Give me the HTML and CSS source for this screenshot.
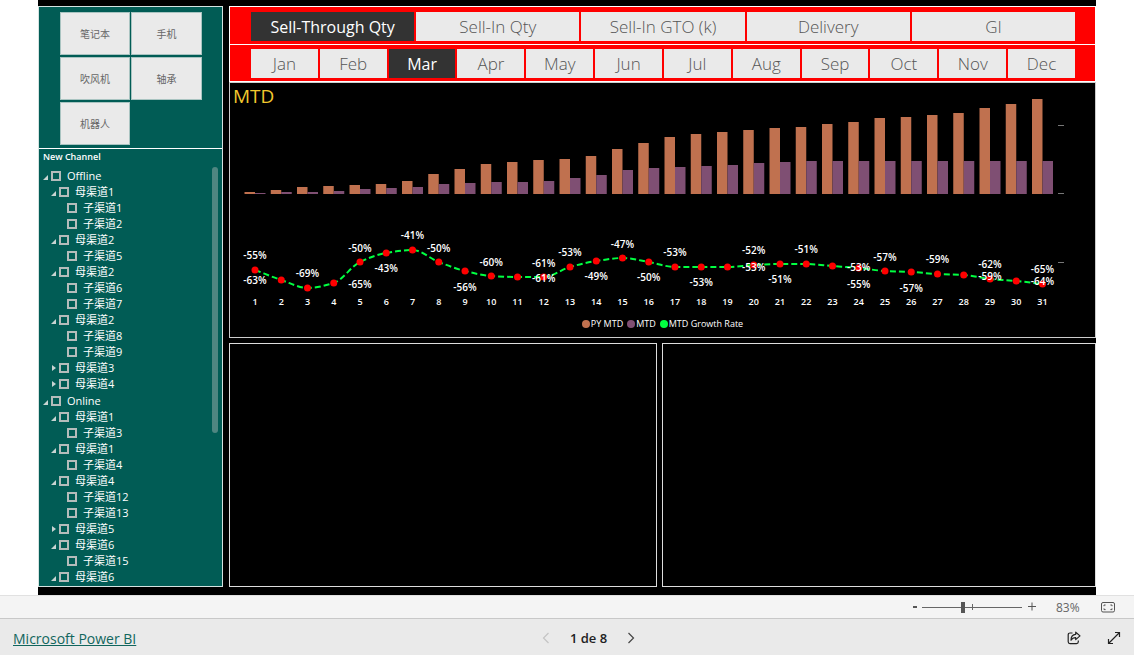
FILE: index.html
```html
<!DOCTYPE html>
<html lang="en">
<head>
<meta charset="utf-8">
<title>Microsoft Power BI</title>
<link rel="stylesheet" href="styles.css">
</head>
<body>
<main class="stage">
  <div class="report">
    <aside class="side">
      <div class="products">
        <button type="button">笔记本</button>
        <button type="button">手机</button>
        <button type="button">吹风机</button>
        <button type="button">轴承</button>
        <button type="button">机器人</button>
      </div>
      <section class="channels">
        <h2 class="channels-title">New Channel</h2>
        <div class="channels-body">
          <ul class="tree" id="tree"></ul>
          <div class="scroll-thumb"></div>
        </div>
      </section>
    </aside>
    <div class="content">
      <div class="slicer slicer-metric">
        <button type="button" class="tile selected">Sell-Through Qty</button>
        <button type="button" class="tile">Sell-In Qty</button>
        <button type="button" class="tile">Sell-In GTO (k)</button>
        <button type="button" class="tile">Delivery</button>
        <button type="button" class="tile">GI</button>
      </div>
      <div class="slicer slicer-month">
        <button type="button" class="tile">Jan</button>
        <button type="button" class="tile">Feb</button>
        <button type="button" class="tile selected">Mar</button>
        <button type="button" class="tile">Apr</button>
        <button type="button" class="tile">May</button>
        <button type="button" class="tile">Jun</button>
        <button type="button" class="tile">Jul</button>
        <button type="button" class="tile">Aug</button>
        <button type="button" class="tile">Sep</button>
        <button type="button" class="tile">Oct</button>
        <button type="button" class="tile">Nov</button>
        <button type="button" class="tile">Dec</button>
      </div>
      <section class="chart-card">
        <h2 class="chart-title">MTD</h2>
        <svg class="chart" id="chart" viewBox="0 0 865 233" role="img" aria-label="MTD by day"></svg>
        <ul class="legend">
          <li><span class="dot dot-py"></span>PY MTD</li>
          <li><span class="dot dot-mtd"></span>MTD</li>
          <li><span class="dot dot-rate"></span>MTD Growth Rate</li>
        </ul>
      </section>
      <div class="empties">
        <section class="empty"></section>
        <section class="empty"></section>
      </div>
    </div>
  </div>
</main>
<div class="zoombar">
  <button type="button" class="zoom-step" aria-label="Zoom out"><svg width="6" height="10" viewBox="0 0 6 10"><path d="M1 5h4" stroke="#555" stroke-width="2"/></svg></button>
  <input class="zoom-range" type="range" min="0" max="100" value="41" aria-label="Zoom">
  <button type="button" class="zoom-step zoom-in" aria-label="Zoom in"><svg width="8" height="10" viewBox="0 0 8 10"><path d="M0 4.500h8M4 .5v8" stroke="#555" stroke-width="1"/></svg></button>
  <span class="zoom-value">83%</span>
  <button type="button" class="zoom-fit" aria-label="Fit to page"><svg width="14" height="11" viewBox="0 0 14 11" fill="none" stroke="#555"><rect x=".5" y=".5" width="13" height="9.5" rx="1.5"/><path d="M3 4.2V3h1.600M9.400 3H11v1.200M3 6.400v1.200h1.600M9.400 7.600H11V6.400"/></svg></button>
</div>
<footer class="footer">
  <a class="brand" href="#">Microsoft Power BI</a>
  <nav class="pager">
    <button type="button" aria-label="Previous page" disabled><svg width="8" height="12" viewBox="0 0 8 12" fill="none" stroke="#c4c4c4" stroke-width="1.2"><path d="M6.5 1 1.5 6l5 5"/></svg></button>
    <span>1 de 8</span>
    <button type="button" aria-label="Next page"><svg width="8" height="12" viewBox="0 0 8 12" fill="none" stroke="#444" stroke-width="1.2"><path d="M1.5 1l5 5-5 5"/></svg></button>
  </nav>
  <div class="actions">
    <button type="button" aria-label="Share"><svg width="14" height="14" viewBox="0 0 14 14" fill="none" stroke="#222" stroke-width="1.2" stroke-linejoin="round"><path d="M5.500 2H3A1.800 1.800 0 0 0 1.200 3.800v7A1.800 1.800 0 0 0 3 12.600h6.500a1.800 1.800 0 0 0 1.800-1.800V9.500"/><path d="M8.700 1.200l4.300 3.700-4.300 3.700V6.600C6.500 6.600 5 7.500 4 9.200 4 5.800 5.600 3.500 8.700 3.300z"/></svg></button>
    <button type="button" aria-label="Full screen"><svg width="14" height="14" viewBox="0 0 14 14" fill="none" stroke="#222" stroke-width="1.2"><path d="M1.500 12.500l11-11M8 1.500h4.500V6M1.500 8v4.500H6"/></svg></button>
  </div>
</footer>
<script src="app.js"></script>
</body>
</html>
```
FILE: styles.css
```css
* {
  box-sizing: border-box;
}

body {
  margin: 0;
  min-height: 100vh;
  display: flex;
  flex-direction: column;
  background: #fff;
  color: #fff;
  font-family: "Open Sans", "Noto Sans CJK SC", sans-serif;
}

button {
  margin: 0;
  padding: 0;
  border: 0;
  background: none;
  font: inherit;
  color: inherit;
  display: flex;
  align-items: center;
  justify-content: center;
}

h2,
ul {
  margin: 0;
  padding: 0;
  font-weight: 400;
  list-style: none;
}

.stage {
  flex: 1;
  display: flex;
  padding: 0 38px;
}

.report {
  flex: 1;
  display: grid;
  grid-template-columns: 185px minmax(0, 1fr);
  column-gap: 6px;
  padding: 6px 0 8px;
  background: #000;
}

/* Left column */

.side {
  display: flex;
  flex-direction: column;
  border: 1px solid #d5e3e1;
  background: #015c55;
}

.products {
  display: grid;
  grid-template-columns: 70px 71px;
  grid-auto-rows: 43px;
  gap: 2px 1px;
  padding: 5px 21px 3px;
}

.products button {
  background: #eaeaea;
  border: 1px solid #a9c4c1;
  color: #666;
  font-size: 10px;
}

.channels {
  flex: 1;
  display: flex;
  flex-direction: column;
  border-top: 1px solid #fff;
  padding: 0 4px 3px;
}

.channels-title {
  font-size: 9px;
  font-weight: 600;
  line-height: 16px;
}

.channels-body {
  flex: 1 1 0;
  min-height: 0;
  display: flex;
  justify-content: space-between;
  overflow: hidden;
  padding-top: 2px;
}

.scroll-thumb {
  flex: none;
  width: 6px;
  height: 266px;
  border-radius: 3px;
  background: #4f8681;
}

.tree {
  font-size: 11px;
  line-height: 16px;
}

.node {
  display: flex;
  align-items: center;
  height: 16px;
  white-space: nowrap;
}

.level-0 {
  height: 17px;
}

.level-1 {
  padding-left: 8px;
}

.level-2 {
  padding-left: 16px;
}

.toggle {
  width: 8px;
  height: 8px;
  justify-content: flex-start;
}

.node label {
  display: flex;
  align-items: center;
  gap: 6px;
}

.node input {
  appearance: none;
  width: 10px;
  height: 10px;
  margin: 0;
  border: 2px solid #b5bcbb;
}

/* Right column */

.content {
  display: flex;
  flex-direction: column;
}

.slicer {
  display: flex;
  gap: 2px;
  border: 1px solid #fff;
  border-bottom: 0;
  background: #f00;
  padding: 5px 20px 3px 21px;
}

.slicer-month {
  border-bottom: 1px solid #fff;
  padding-top: 4px;
}

.tile {
  flex: 1 1 0;
  height: 29px;
  background: #eaeaea;
  color: #555;
  font-size: 17px;
  font-weight: 300;
  white-space: nowrap;
}

.tile.selected {
  background: #333;
  color: #fff;
  font-size: 16px;
  font-weight: 400;
}

.chart-card {
  position: relative;
  border: 1px solid #ccc;
  padding-bottom: 5px;
}

.chart-title {
  position: absolute;
  left: 3px;
  top: 0;
  color: #f2c82e;
  font-size: 19px;
  line-height: 26px;
}

.chart {
  display: block;
  width: 100%;
  height: auto;
}

.chart text {
  fill: #fff;
  font-size: 9px;
  text-anchor: middle;
  font-weight: 600;
}

.chart .rate-label {
  font-size: 10px;
}

.bar-py {
  fill: #c0714f;
}

.bar-mtd {
  fill: #7f4f73;
}

.rate-line {
  fill: none;
  stroke: #00ff41;
  stroke-width: 2;
  stroke-dasharray: 6 3;
}

.rate-dot {
  fill: #f00;
}

.tick {
  stroke: #777;
  stroke-width: 1;
}

.legend {
  display: flex;
  justify-content: center;
  gap: 4px;
  font-size: 9px;
  line-height: 16px;
}

.legend li {
  display: flex;
  align-items: center;
  gap: 1px;
}

.dot {
  width: 8px;
  height: 8px;
  border-radius: 50%;
}

.dot-py {
  background: #c0714f;
}

.dot-mtd {
  background: #7f4f73;
}

.dot-rate {
  background: #00ff41;
}

.empties {
  flex: 1;
  display: grid;
  grid-template-columns: 428fr 434fr;
  gap: 5px;
  margin-top: 5px;
}

.empty {
  border: 1px solid #ddd;
}

/* Bottom bars */

.zoombar {
  display: flex;
  align-items: center;
  justify-content: flex-end;
  height: 23px;
  padding-right: 19px;
  border-top: 1px solid #e1e1e1;
  background: #f4f4f4;
  color: #666;
  font-size: 12px;
}

.zoom-range {
  appearance: none;
  width: 100px;
  height: 12px;
  margin: 0 6px 0 4px;
  background:
    linear-gradient(#666, #666) 50px 50% / 1px 6px no-repeat,
    linear-gradient(#666, #666) 0 50% / 100% 1px no-repeat;
}

.zoom-range::-webkit-slider-thumb {
  appearance: none;
  width: 4px;
  height: 11px;
  background: #555;
}

.zoom-value {
  width: 45px;
  margin-left: 20px;
}

.footer {
  display: grid;
  grid-template-columns: 1fr auto 1fr;
  align-items: center;
  height: 37px;
  padding: 2px 13px 0;
  border-top: 1px solid #c8c8c8;
  background: #eaeaea;
  color: #222;
  font-size: 13px;
}

.brand {
  justify-self: start;
  color: #11665d;
  font-size: 14px;
}

.pager {
  display: flex;
  align-items: center;
  gap: 20px;
  margin-left: 43px;
  font-weight: 600;
}

.actions {
  display: flex;
  justify-content: flex-end;
  gap: 26px;
}
```
FILE: app.js
```javascript
const NS = "http://www.w3.org/2000/svg";

function add(parent, name, attrs, text) {
  const el = document.createElementNS(NS, name);
  for (const key in attrs) el.setAttribute(key, attrs[key]);
  if (text !== undefined) el.textContent = text;
  parent.appendChild(el);
  return el;
}

/* Channel tree: [level, label, state] */
const nodes = [
  [0, "Offline", "open"], [1, "母渠道1", "open"], [2, "子渠道1"], [2, "子渠道2"],
  [1, "母渠道2", "open"], [2, "子渠道5"], [1, "母渠道2", "open"], [2, "子渠道6"],
  [2, "子渠道7"], [1, "母渠道2", "open"], [2, "子渠道8"], [2, "子渠道9"],
  [1, "母渠道3", "closed"], [1, "母渠道4", "closed"], [0, "Online", "open"],
  [1, "母渠道1", "open"], [2, "子渠道3"], [1, "母渠道1", "open"], [2, "子渠道4"],
  [1, "母渠道4", "open"], [2, "子渠道12"], [2, "子渠道13"], [1, "母渠道5", "closed"],
  [1, "母渠道6", "open"], [2, "子渠道15"], [1, "母渠道6", "open"]
];
const arrows = { open: "M5 3v5H0z", closed: "M1 1l4 3-4 3z" };

const tree = document.getElementById("tree");
for (const [level, label, state] of nodes) {
  const row = document.createElement("li");
  row.className = "node level-" + level;
  const toggle = document.createElement(state ? "button" : "span");
  toggle.className = "toggle";
  if (state) {
    toggle.type = "button";
    toggle.setAttribute("aria-label", "Toggle " + label);
    const icon = add(toggle, "svg", { width: 6, height: 8, viewBox: "0 0 6 8" });
    add(icon, "path", { d: arrows[state], fill: "#c8d4d2" });
  }
  const field = document.createElement("label");
  const box = document.createElement("input");
  box.type = "checkbox";
  field.append(box, label);
  row.append(toggle, field);
  tree.appendChild(row);
}

/* Bar heights and growth-rate positions for each day */
const py = [2, 4, 7, 8, 9, 10, 13, 20, 25, 30, 32, 34, 35, 38, 45, 51, 57, 60, 62, 64, 66, 67, 70, 72, 76, 77, 79, 81, 86, 90, 95];
const mtd = [1, 2, 2, 3, 5, 6, 7, 10, 11, 12, 12, 13, 16, 19, 24, 26, 27, 28, 29, 31, 32, 33, 33, 33, 33, 33, 33, 33, 33, 33, 33];
const rate = [187, 197, 205, 200, 179, 170, 167, 179, 188, 193, 194, 194, 184, 178, 175, 179, 184, 184, 184, 182, 181, 181, 183, 185, 188, 189, 191, 192, 196, 198, 201];

/* Data labels: [day, centre height, text] */
const labels = [
  [1, 173, "-55%"], [1, 198, "-63%"], [3, 191, "-69%"], [5, 166, "-50%"], [5, 202, "-65%"],
  [6, 186, "-43%"], [7, 153, "-41%"], [8, 166, "-50%"], [9, 205, "-56%"], [10, 180, "-60%"],
  [12, 181, "-61%"], [12, 196, "-61%"], [13, 170, "-53%"], [14, 194, "-49%"], [15, 162, "-47%"],
  [16, 195, "-50%"], [17, 170, "-53%"], [18, 200, "-53%"], [20, 168, "-52%"], [20, 185, "-53%"],
  [21, 197, "-51%"], [22, 167, "-51%"], [24, 185, "-53%"], [24, 202, "-55%"], [25, 175, "-57%"],
  [26, 206, "-57%"], [27, 177, "-59%"], [29, 182, "-62%"], [29, 194, "-59%"], [31, 187, "-65%"],
  [31, 199, "-64%"]
];

const chart = document.getElementById("chart");
const base = 111;
const dayX = day => 25 + (day - 1) * 26.25;

for (let i = 0; i < 31; i++) {
  const x = dayX(i + 1);
  add(chart, "rect", { class: "bar-py", x: x - 10.5, y: base - py[i], width: 10.5, height: py[i] });
  add(chart, "rect", { class: "bar-mtd", x, y: base - mtd[i], width: 10.5, height: mtd[i] });
}
for (const y of [42.5, 110.5, 179.5]) {
  add(chart, "line", { class: "tick", x1: 828, x2: 834, y1: y, y2: y });
}
/* Monotone cubic curve through the points */
const step = 26.25;
const slope = rate.map((y, i) => {
  if (i === 0) return rate[1] - y;
  if (i === 30) return y - rate[29];
  const a = y - rate[i - 1], b = rate[i + 1] - y;
  return a * b <= 0 ? 0 : 2 * a * b / (a + b);
});
let d = "M" + dayX(1) + " " + rate[0];
for (let i = 1; i < 31; i++) {
  const x0 = dayX(i), x1 = dayX(i + 1);
  d += "C" + [x0 + step / 3, rate[i - 1] + slope[i - 1] / 3, x1 - step / 3, rate[i] - slope[i] / 3, x1, rate[i]].join(" ");
}
add(chart, "path", { class: "rate-line", d });
rate.forEach((y, i) => {
  add(chart, "circle", { class: "rate-dot", cx: dayX(i + 1), cy: y, r: 3.5 });
  add(chart, "text", { x: dayX(i + 1), y: 222 }, i + 1);
});
for (const [day, y, text] of labels) {
  add(chart, "text", { class: "rate-label", x: dayX(day), y: y + 3 }, text);
}
```
